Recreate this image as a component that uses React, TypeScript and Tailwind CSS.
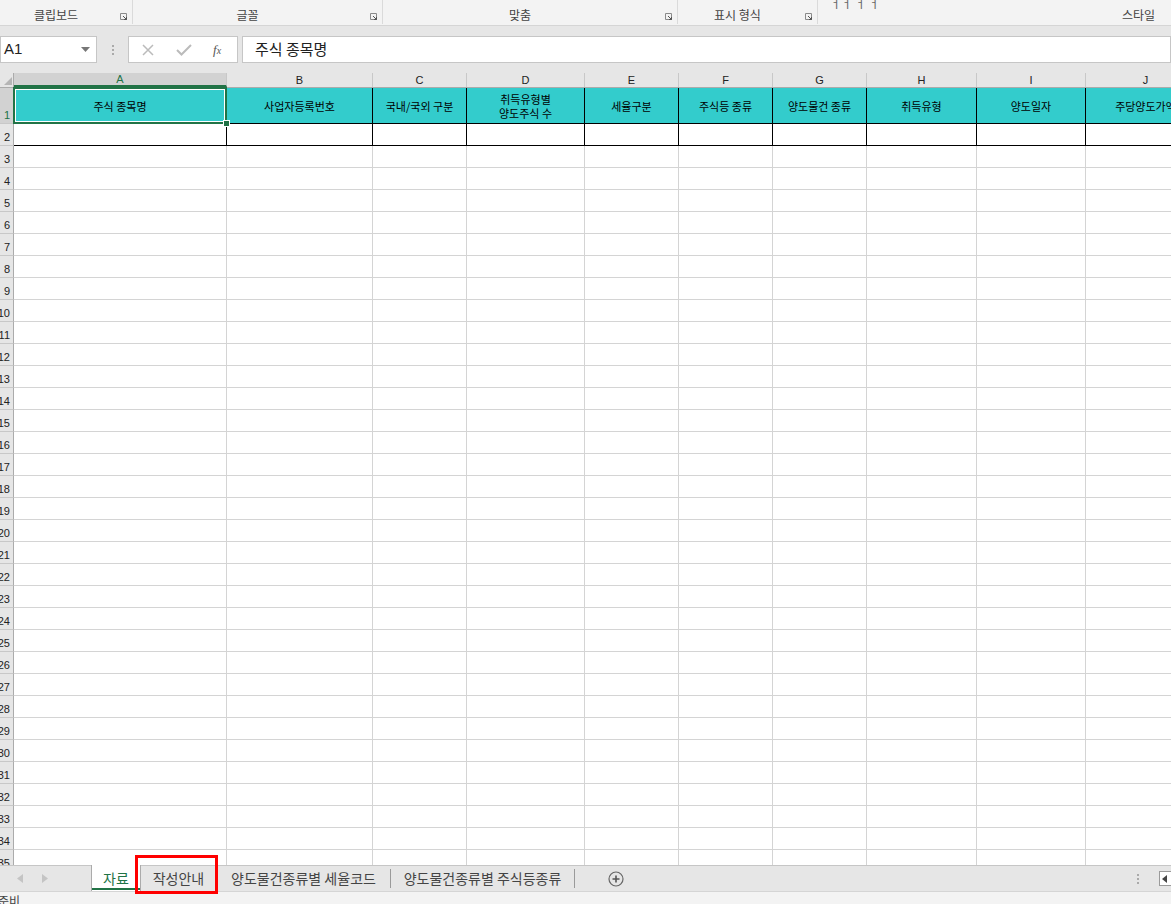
import React from "react";

const KR = { fontFamily: '"Noto Sans CJK KR", "Noto Sans", sans-serif' };

const cols = [
  { key: "A", w: "w-[213px]", label: "주식 종목명" },
  { key: "B", w: "w-[146px]", label: "사업자등록번호" },
  { key: "C", w: "w-[94px]", label: "국내/국외 구분" },
  { key: "D", w: "w-[118px]", label: "취득유형별\n양도주식 수" },
  { key: "E", w: "w-[94px]", label: "세율구분" },
  { key: "F", w: "w-[94px]", label: "주식등 종류" },
  { key: "G", w: "w-[94px]", label: "양도물건 종류" },
  { key: "H", w: "w-[110px]", label: "취득유형" },
  { key: "I", w: "w-[109px]", label: "양도일자" },
  { key: "J", w: "w-[120px]", label: "주당양도가액" },
];

const groups = [
  { name: "클립보드", w: "w-[133px]" },
  { name: "글꼴", w: "w-[250px]" },
  { name: "맞춤", w: "w-[295px]" },
  { name: "표시 형식", w: "w-[140px]" },
];

function Launcher() {
  return (
    <svg width="8" height="8" viewBox="0 0 8 8" className="absolute right-[4px] top-[13px]">
      <path d="M0.5 0.5h6v6h-6z" fill="none" stroke="#8a8a8a" />
      <path d="M3 3l3.5 3.5M6.5 4v2.5H4" fill="none" stroke="#555" />
    </svg>
  );
}

function Ribbon() {
  return (
    <div className="flex h-[26px] bg-[#f3f3f3] border-b border-[#d5d5d5]" style={KR}>
      {groups.map((g) => (
        <div key={g.name} className={`relative ${g.w} h-[24px] border-r border-[#dadada]`}>
          <div className="absolute bottom-[1px] left-0 right-[20px] text-center text-[12px] leading-[16px] text-[#444]">
            {g.name}
          </div>
          <Launcher />
        </div>
      ))}
      <div className="relative flex-1">
        <div className="absolute top-[-6px] left-[12px] text-[12px] text-[#666]">ㅓㅓ ㅓ ㅓ</div>
        <div className="absolute bottom-[2px] right-[16px] text-[12px] leading-[16px] text-[#444]">스타일</div>
      </div>
    </div>
  );
}

function FormulaBar() {
  return (
    <div className="flex items-center h-[47px] bg-[#e6e6e6] pt-[10px] pb-[10px]">
      <div className="flex items-center justify-between w-[97px] h-[27px] bg-white border border-[#c6c6c6] pl-[3px] pr-[6px]">
        <span className="text-[15px] text-[#222]" style={{ fontFamily: '"Liberation Sans", Arial, sans-serif' }}>
          A1
        </span>
        <svg width="9" height="5" viewBox="0 0 9 5">
          <path d="M0 0h9L4.5 5z" fill="#777" />
        </svg>
      </div>
      <div className="flex flex-col gap-[2px] w-[31px] items-center">
        <span className="w-[2px] h-[2px] bg-[#aaa]" />
        <span className="w-[2px] h-[2px] bg-[#aaa]" />
        <span className="w-[2px] h-[2px] bg-[#aaa]" />
      </div>
      <div className="flex items-center w-[110px] h-[27px] bg-white border border-[#c6c6c6]">
        <svg width="12" height="12" viewBox="0 0 12 12" className="ml-[13px]">
          <path d="M1 1l10 10M11 1L1 11" stroke="#bbb" strokeWidth="1.5" />
        </svg>
        <svg width="16" height="12" viewBox="0 0 16 12" className="ml-[22px]">
          <path d="M1 6l4.5 4.5L15 1" fill="none" stroke="#bbb" strokeWidth="2" />
        </svg>
        <span
          className="ml-[21px] text-[13px] italic text-[#555]"
          style={{ fontFamily: '"Liberation Serif", "Times New Roman", serif' }}
        >
          f<span className="text-[10px]">x</span>
        </span>
      </div>
      <div className="flex items-center flex-1 h-[27px] bg-white border border-[#c6c6c6] ml-[4px] pl-[12px]">
        <span className="text-[15px] text-[#222]" style={KR}>
          주식 종목명
        </span>
      </div>
    </div>
  );
}

const HEAD_FONT = { fontFamily: '"Liberation Sans", Arial, sans-serif' };

function ColumnHeader() {
  return (
    <div className="flex h-[15px] bg-[#e6e6e6] border-b border-[#ababab]" style={HEAD_FONT}>
      <div className="relative w-[14px] shrink-0 border-r border-[#ababab]">
        <svg width="8" height="8" viewBox="0 0 8 8" className="absolute left-[4px] bottom-[2px]">
          <path d="M8 0v8H0z" fill="#b5b5b5" />
        </svg>
      </div>
      {cols.map((c) => (
        <div
          key={c.key}
          className={`${c.w} shrink-0 flex items-center justify-center text-[11px] leading-none border-r border-[#c8c8c8] ${
            c.key === "A" ? "bg-[#d2d2d2] text-[#217346] border-b-2 border-b-[#217346]" : "text-[#222]"
          }`}
        >
          {c.key}
        </div>
      ))}
    </div>
  );
}

function RowHead({ n, h, selected }: { n: number; h: string; selected?: boolean }) {
  return (
    <div
      className={`${h} w-[14px] shrink-0 relative overflow-hidden border-r border-[#ababab] border-b border-b-[#c8c8c8] ${
        selected ? "bg-[#d2d2d2] text-[#217346]" : "bg-[#e6e6e6] text-[#222]"
      }`}
      style={HEAD_FONT}
    >
      <span className="absolute right-[3px] bottom-[1px] text-[11px] leading-[13px]">{n}</span>
    </div>
  );
}

function Sheet() {
  const rows = Array.from({ length: 33 }, (_, i) => i + 3);
  return (
    <div className="h-[792px] overflow-hidden bg-white">
      <ColumnHeader />
      <div className="flex">
        <RowHead n={1} h="h-[36px]" selected />
        {cols.map((c) => (
          <div
            key={c.key}
            className={`${c.w} h-[36px] shrink-0 relative flex items-center justify-center text-center bg-[#33cccc] border-r border-black border-b border-b-black text-[11px] leading-[14px] text-black whitespace-pre-line`}
            style={KR}
          >
            {c.label}
            {c.key === "A" && (
              <>
                <div className="absolute inset-[-1px] border-2 border-[#217346]">
                  <div className="absolute inset-0 border border-white" />
                </div>
                <div className="absolute right-[-4px] bottom-[-4px] w-[7px] h-[7px] bg-[#217346] border border-white z-10" />
              </>
            )}
          </div>
        ))}
      </div>
      <div className="flex">
        <RowHead n={2} h="h-[22px]" />
        {cols.map((c) => (
          <div key={c.key} className={`${c.w} h-[22px] shrink-0 border-r border-black border-b border-b-black`} />
        ))}
      </div>
      {rows.map((r) => (
        <div key={r} className="flex">
          <RowHead n={r} h="h-[22px]" />
          {cols.map((c) => (
            <div key={c.key} className={`${c.w} h-[22px] shrink-0 border-r border-b border-[#d4d4d4]`} />
          ))}
        </div>
      ))}
    </div>
  );
}

function TabBar() {
  return (
    <div className="relative z-10 flex items-stretch h-[26px] bg-[#e6e6e6] border-t border-[#c6c6c6]" style={KR}>
      <div className="flex items-center w-[91px] shrink-0 pl-[17px] gap-[19px]">
        <svg width="6" height="9" viewBox="0 0 6 9">
          <path d="M6 0v9L0 4.5z" fill="#c4c4c4" />
        </svg>
        <svg width="6" height="9" viewBox="0 0 6 9">
          <path d="M0 0v9l6-4.5z" fill="#c4c4c4" />
        </svg>
      </div>
      <div className="relative -mt-[1px] w-[50px] shrink-0 bg-white border-l border-r border-[#ababab] flex items-center justify-center text-[14px] text-[#217346]">
        자료
        <div className="absolute left-0 right-0 bottom-[1px] h-[2px] bg-[#217346]" />
      </div>
      <div className="w-[75px] shrink-0 flex items-center justify-center text-[14px] text-[#444]">작성안내</div>
      <div className="flex items-center">
        <span className="w-[1px] h-[19px] bg-[#9a9a9a]" />
      </div>
      <div className="w-[173px] shrink-0 flex items-center justify-center text-[14px] text-[#444]">
        양도물건종류별 세율코드
      </div>
      <div className="flex items-center">
        <span className="w-[1px] h-[19px] bg-[#9a9a9a]" />
      </div>
      <div className="w-[183px] shrink-0 flex items-center justify-center text-[14px] text-[#444]">
        양도물건종류별 주식등종류
      </div>
      <div className="flex items-center">
        <span className="w-[1px] h-[19px] bg-[#9a9a9a]" />
      </div>
      <div className="flex items-center pl-[33px]">
        <svg width="16" height="16" viewBox="0 0 16 16">
          <circle cx="8" cy="8" r="7" fill="none" stroke="#666" strokeWidth="1.2" />
          <path d="M8 4.5v7M4.5 8h7" stroke="#555" strokeWidth="1.6" />
        </svg>
      </div>
      <div className="flex-1" />
      <div className="flex flex-col gap-[2px] justify-center w-[10px] items-center mr-[16px]">
        <span className="w-[2px] h-[2px] bg-[#aaa]" />
        <span className="w-[2px] h-[2px] bg-[#aaa]" />
        <span className="w-[2px] h-[2px] bg-[#aaa]" />
      </div>
      <div className="flex items-center">
        <div className="w-[12px] h-[15px] bg-white border border-r-0 border-[#9a9a9a] flex items-center pl-[2px]">
          <svg width="5" height="8" viewBox="0 0 5 8">
            <path d="M5 0v8L0 4z" fill="#444" />
          </svg>
        </div>
      </div>
      <div className="absolute left-[135px] top-[-11px] w-[83px] h-[39px] border-[3px] border-[#ff0000] pointer-events-none" />
    </div>
  );
}

function StatusBar() {
  return (
    <div className="relative h-[13px] overflow-hidden bg-[#f3f3f3] border-t border-[#d5d5d5]" style={KR}>
      <span className="absolute left-[-2px] top-[2px] text-[12px] leading-[14px] text-[#444]">준비</span>
    </div>
  );
}

export default function App() {
  return (
    <div className="w-[1171px] h-[904px] overflow-hidden bg-[#e6e6e6] select-none">
      <Ribbon />
      <FormulaBar />
      <Sheet />
      <TabBar />
      <StatusBar />
    </div>
  );
}
